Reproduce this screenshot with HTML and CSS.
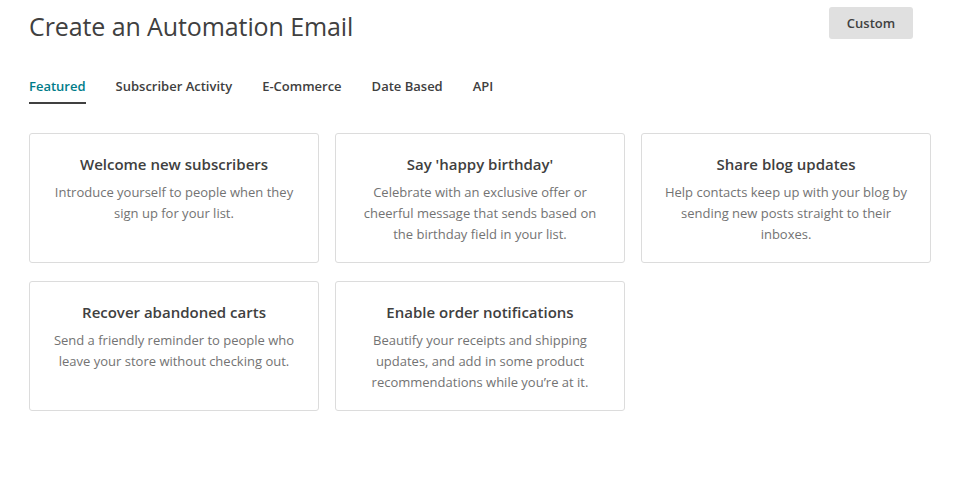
FILE: index.html
```html
<!DOCTYPE html>
<html lang="en">
<head>
    <meta charset="UTF-8">
    <meta name="viewport" content="width=device-width, initial-scale=1.0">
    <title>Create an Automation Email</title>
    <link rel="stylesheet" href="styles.css">
</head>
<body>

    <!-- Header -->
    <div class="header">
        <h1>Create an Automation Email</h1>
        <button class="custom-btn">Custom</button>
    </div>

    <!-- Tabs -->
    <div class="tabs">
        <span class="tab active">Featured</span>
        <span class="tab">Subscriber Activity</span>
        <span class="tab">E-Commerce</span>
        <span class="tab">Date Based</span>
        <span class="tab">API</span>
    </div>

    <!-- Cards -->
    <div class="cards">
        <div class="card">
            <h3>Welcome new subscribers</h3>
            <p>Introduce yourself to people when they sign up for your list.</p>
        </div>
        <div class="card">
            <h3>Say 'happy birthday'</h3>
            <p>Celebrate with an exclusive offer or cheerful message that sends based on the birthday field in your list.</p>
        </div>
        <div class="card">
            <h3>Share blog updates</h3>
            <p>Help contacts keep up with your blog by sending new posts straight to their inboxes.</p>
        </div>
        <div class="card">
            <h3>Recover abandoned carts</h3>
            <p>Send a friendly reminder to people who leave your store without checking out.</p>
        </div>
        <div class="card">
            <h3>Enable order notifications</h3>
            <p>Beautify your receipts and shipping updates, and add in some product recommendations while you’re at it.</p>
        </div>
    </div>

</body>
</html>
```

FILE: styles.css
```css
body {
    margin: 0;
    padding: 0 24px 0 29px;
    font-family: "Open Sans", Arial, sans-serif;
    color: #404040;
    background: white;
}
.header {
    display: flex;
    justify-content: space-between;
    align-items: flex-start;
    padding-right: 17px;
}
h1 {
    margin: 9px 0 0 0;
    font-size: 25px;
    font-weight: 400;
    line-height: 34px;
    color: #404040;
    letter-spacing: -0.1px;
}
.custom-btn {
    margin-top: 7px;
    width: 84px;
    height: 32px;
    border: none;
    border-radius: 3px;
    background-color: #e0e0e0;
    color: #404040;
    font-family: "Open Sans", Arial, sans-serif;
    font-size: 13px;
    font-weight: 600;
    cursor: pointer;
}
.tabs {
    display: flex;
    gap: 30px;
    margin-top: 34px;
}
.tab {
    font-size: 13px;
    font-weight: 600;
    color: #404040;
    line-height: 18px;
    padding-bottom: 7px;
    border-bottom: 2px solid transparent;
}
.tab.active {
    color: #007c89;
    border-bottom-color: #404040;
}
.cards {
    display: grid;
    grid-template-columns: repeat(3, 290px);
    column-gap: 16px;
    row-gap: 18px;
    margin-top: 29px;
}
.card {
    height: 130px;
    box-sizing: border-box;
    border: 1px solid #dcdcdc;
    border-radius: 3px;
    padding: 19px 22px;
    text-align: center;
}
.card h3 {
    margin: 0;
    font-size: 15px;
    font-weight: 600;
    line-height: 22px;
    color: #404040;
}
.card p {
    margin: 7px 0 0 0;
    font-size: 13px;
    line-height: 21px;
    color: #737373;
}
```
